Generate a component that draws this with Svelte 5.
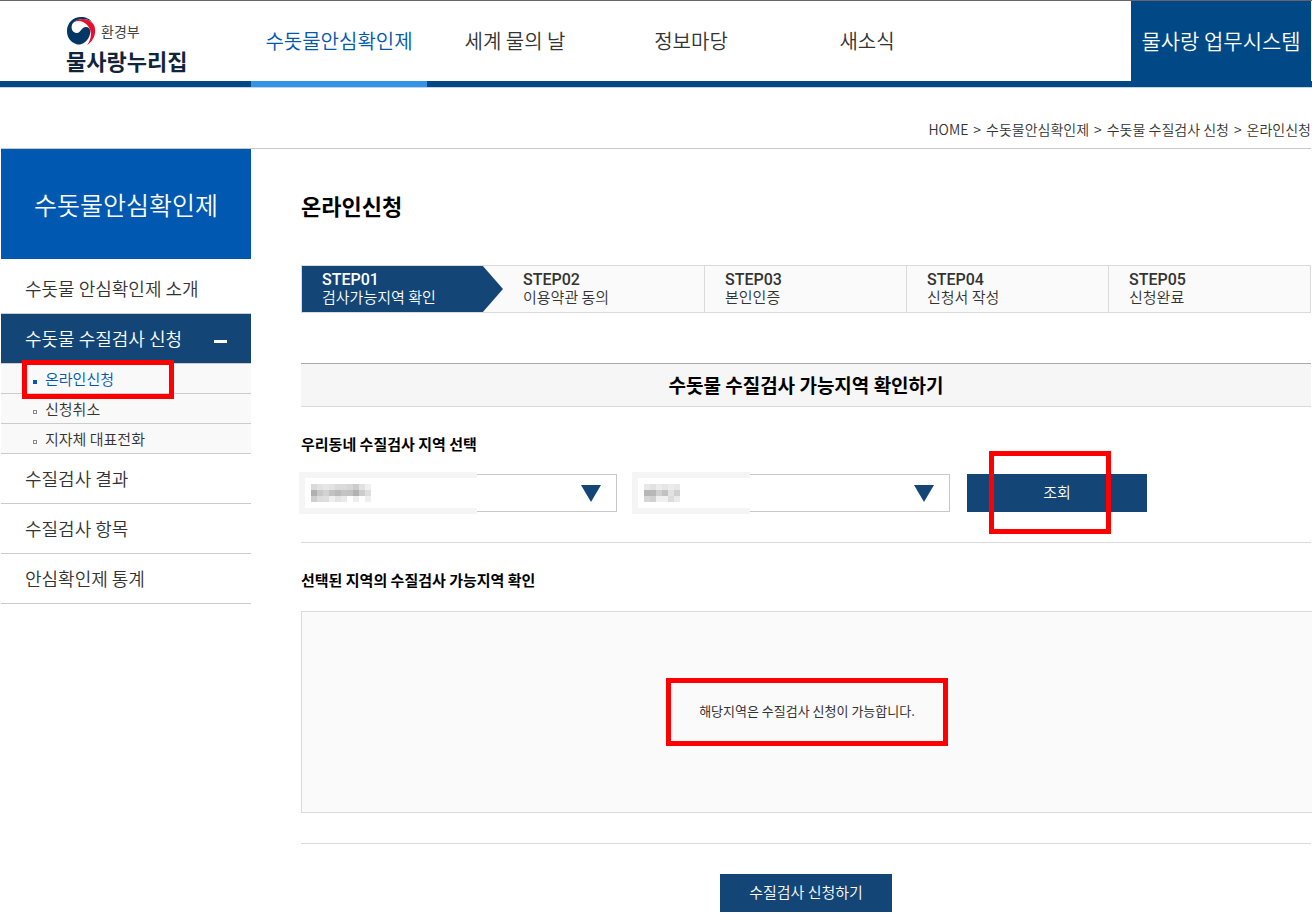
<script>
	const menus = [
		{ name: '수돗물안심확인제', active: true },
		{ name: '세계 물의 날' },
		{ name: '정보마당' },
		{ name: '새소식' }
	];

	const path = ['수돗물안심확인제', '수돗물 수질검사 신청', '온라인신청'];

	const subMenus = [
		{ name: '온라인신청', active: true },
		{ name: '신청취소' },
		{ name: '지자체 대표전화' }
	];

	const sideMenus = ['수질검사 결과', '수질검사 항목', '안심확인제 통계'];

	const steps = ['검사가능지역 확인', '이용약관 동의', '본인인증', '신청서 작성', '신청완료'];

	// grey levels of the masked values, 6px per cell
	const regions = [
		{
			id: 'sido',
			label: '시도',
			width: 178,
			cells: [
				[218, 226, 230, 226, 218, 218, 214, 204, 226, 240],
				[176, 200, 210, 194, 186, 196, 194, 178, 204, 222],
				[206, 220, 222, 238, 228, 234, 255, 238, 255, 240]
			]
		},
		{
			id: 'sigungu',
			label: '시군구',
			width: 118,
			cells: [
				[232, 226, 236, 230, 236, 232],
				[182, 184, 208, 194, 226, 208],
				[214, 208, 240, 240, 220, 234]
			]
		}
	];
</script>

<div class="page">
	<header>
		<a class="logo" href="#home">
			<span class="ministry">
				<svg width="30" height="30" viewBox="0 0 30 30" aria-hidden="true">
					<path
						d="M1 15 C1 7 7 1 15 1 C20 1 24 3 26 6 C21 2 12 2 7 7 C4 11 6 17 11 17 C15 17 15 11 20 11 C25 11 25 17 23 21 C20 27 14 30 10 28 C4 26 1 21 1 15Z"
						fill="#003764"
					/>
					<path
						d="M8 6 C14 1 24 2 28 9 C31 16 28 25 21 29 C26 23 26 15 22 10 C18 5 13 4 8 6Z"
						fill="#e60f2d"
					/>
				</svg>
				환경부
			</span>
			<strong>물사랑누리집</strong>
		</a>
		<nav>
			{#each menus as menu}
				<a href="#menu" class:active={menu.active}>{menu.name}</a>
			{/each}
		</nav>
		<a class="system" href="#system">물사랑 업무시스템</a>
	</header>

	<div class="path">
		<span>HOME</span>
		{#each path as name}
			<span>&gt;</span>
			<span>{name}</span>
		{/each}
	</div>

	<div class="container">
		<aside>
			<h2>수돗물안심확인제</h2>
			<ul>
				<li><a class="first" href="#intro">수돗물 안심확인제 소개</a></li>
				<li>
					<a class="open" href="#apply">수돗물 수질검사 신청 <i></i></a>
					<ul class="sub">
						{#each subMenus as sub}
							<li>
								<a href="#sub" class:on={sub.active}>{sub.name}</a>
								{#if sub.active}<span class="mark mark-menu"></span>{/if}
							</li>
						{/each}
					</ul>
				</li>
				{#each sideMenus as name}
					<li><a href="#side">{name}</a></li>
				{/each}
			</ul>
		</aside>

		<main>
			<h1>온라인신청</h1>

			<ol class="steps">
				{#each steps as step, i}
					<li class:current={i === 0}>
						<strong>STEP0{i + 1}</strong>
						<span>{step}</span>
					</li>
				{/each}
			</ol>

			<h2 class="banner">수돗물 수질검사 가능지역 확인하기</h2>

			<h3>우리동네 수질검사 지역 선택</h3>
			<form class="search" on:submit|preventDefault>
				{#each regions as region}
					<div class="select">
						<select id={region.id} aria-label={region.label}>
							<option></option>
						</select>
						<svg class="arrow" width="20" height="17" viewBox="0 0 20 17" aria-hidden="true">
							<path d="M0 0H20L10 17Z" fill="#134676" />
						</svg>
						<svg class="mask" width={region.width} height="42" aria-hidden="true">
							<rect width={region.width} height="42" fill="#f5f5f5" />
							<rect x="6" y="6" width={region.width - 6} height="30" fill="#fff" />
							{#each region.cells as row, y}
								{#each row as level, x}
									<rect x={12 + x * 6} y={12 + y * 6} width="6" height="6" fill="rgb({level},{level},{level})" />
								{/each}
							{/each}
						</svg>
					</div>
				{/each}
				<button class="btn search-btn">조회<span class="mark mark-search"></span></button>
			</form>

			<h3>선택된 지역의 수질검사 가능지역 확인</h3>
			<div class="result">
				<p>해당지역은 수질검사 신청이 가능합니다.</p>
			</div>

			<div class="bottom">
				<button class="btn">수질검사 신청하기</button>
			</div>
		</main>
	</div>
</div>

<style>
	:global(body) {
		background: #fff;
	}

	.page {
		padding: 0 1px;
		border-top: 1px solid #66666a;
		overflow: hidden;
		font-family: 'Noto Sans CJK KR', sans-serif;
		font-weight: 350;
		color: #333;
	}

	a {
		color: inherit;
		text-decoration: none;
	}

	ul,
	ol {
		margin: 0;
		padding: 0;
		list-style: none;
	}

	h1,
	h2,
	h3,
	p {
		margin: 0;
	}

	header {
		display: flex;
		height: 80px;
		margin: 0 -1px;
		padding: 0 1px;
		border-bottom: 6px solid #004986;
		box-shadow: 0 1px 0 #c5d3df;
	}

	.logo {
		width: 185px;
		padding: 15px 0 0 65px;
		color: #10243c;
	}

	.ministry {
		display: flex;
		align-items: center;
		gap: 5px;
		height: 30px;
		font-size: 14px;
		font-weight: 400;
		color: #444;
	}

	.logo strong {
		display: block;
		font-size: 22px;
		line-height: 28px;
		font-weight: 700;
	}

	nav {
		display: flex;
		flex: 1;
	}

	nav a {
		width: 176px;
		height: 80px;
		border-bottom: 6px solid transparent;
		font-size: 20px;
		line-height: 80px;
		text-align: center;
	}

	nav a.active {
		border-color: #3393e6;
		color: #0058b0;
	}

	.system {
		width: 180px;
		background: #004986;
		color: #fff;
		font-size: 21px;
		line-height: 78px;
		text-align: center;
	}

	.path {
		display: flex;
		justify-content: flex-end;
		gap: 5px;
		height: 61px;
		border-bottom: 1px solid #c8c8c8;
		font-size: 14px;
		line-height: 85px;
	}

	.container {
		display: flex;
		gap: 50px;
	}

	aside {
		width: 250px;
		flex: none;
	}

	aside h2 {
		background: #0058b0;
		color: #fff;
		font-size: 25px;
		font-weight: 350;
		line-height: 110px;
		text-align: center;
	}

	aside a {
		display: block;
		padding-left: 24px;
		border-bottom: 1px solid #ccc;
		font-size: 18px;
		line-height: 49px;
	}

	aside .first {
		padding-top: 5px;
	}

	aside .open {
		display: flex;
		align-items: center;
		justify-content: space-between;
		padding-right: 24px;
		background: #134676;
		color: #fff;
	}

	.open i {
		width: 13px;
		height: 3px;
		margin-top: 6px;
		background: #fff;
	}

	.sub li {
		position: relative;
	}

	.sub a {
		display: flex;
		align-items: center;
		gap: 8px;
		padding-left: 32px;
		background: #f9f9f9;
		font-size: 15px;
		line-height: 29px;
	}

	.sub a::before {
		content: '';
		box-sizing: border-box;
		width: 4px;
		height: 4px;
		margin-top: 6px;
		border: 1px solid #888;
	}

	.sub a.on {
		color: #0058b0;
	}

	.sub a.on::before {
		background: #0058b0;
		border-color: #0058b0;
	}

	.mark {
		position: absolute;
		z-index: 1;
		box-sizing: border-box;
		border: 5px solid #f00;
		pointer-events: none;
	}

	.mark-menu {
		top: -4px;
		left: 21px;
		width: 152px;
		height: 39px;
	}

	main {
		flex: 1;
		min-width: 0;
	}

	h1 {
		padding: 40px 0 44px;
		color: #000;
		font-size: 22px;
		font-weight: 700;
		line-height: 32px;
	}

	.steps {
		display: flex;
		border: 1px solid #dadada;
		background: #fafafa;
	}

	.steps li {
		flex: 1;
		box-sizing: border-box;
		height: 46px;
		padding: 5px 0 0 20px;
		border-left: 1px solid #dadada;
		font-size: 15px;
		line-height: 17px;
	}

	.steps li:first-child,
	.steps li:nth-child(2) {
		border-left: 0;
	}

	.steps .current {
		background: #134676;
		clip-path: polygon(0 0, 90% 0, 100% 50%, 90% 100%, 0 100%);
		color: #fff;
	}

	.steps strong,
	.steps span {
		display: block;
	}

	.steps strong {
		font-family: Roboto, sans-serif;
		font-size: 16px;
		font-weight: 500;
	}

	.banner {
		margin: 50px 0 23px;
		border-top: 1px solid #aaa;
		border-bottom: 1px solid #dadada;
		background: #f6f6f6;
		color: #000;
		font-size: 19px;
		font-weight: 700;
		line-height: 42px;
		text-align: center;
	}

	h3 {
		color: #000;
		font-size: 15px;
		font-weight: 700;
		line-height: 28px;
	}

	.search {
		display: flex;
		gap: 17px;
		margin-bottom: 23px;
		padding: 16px 0 30px;
		border-bottom: 1px solid #dadada;
	}

	.select {
		position: relative;
		width: 316px;
	}

	select {
		width: 100%;
		height: 38px;
		border: 1px solid #c8c8c8;
		border-radius: 0;
		background: #fff;
		appearance: none;
	}

	.arrow {
		position: absolute;
		top: 11px;
		right: 16px;
		pointer-events: none;
	}

	.mask {
		position: absolute;
		top: -2px;
		left: -2px;
		pointer-events: none;
	}

	.btn {
		position: relative;
		height: 38px;
		padding: 0 29px 4px;
		border: 0;
		background: #134676;
		color: #fff;
		font-family: inherit;
		font-size: 15px;
		font-weight: 350;
		cursor: pointer;
	}

	.search-btn {
		width: 180px;
	}

	.mark-search {
		top: -23px;
		left: 22px;
		width: 122px;
		height: 83px;
	}

	.result {
		display: flex;
		align-items: center;
		justify-content: center;
		height: 200px;
		margin: 17px -1px 30px 0;
		border: 1px solid #dadada;
		border-right: 0;
		background: #fafafa;
	}

	.result p {
		padding: 18px 28px 20px;
		border: 5px solid #f00;
		font-size: 13px;
		font-weight: 400;
		line-height: 20px;
	}

	.bottom {
		padding: 30px 0 2px;
		border-top: 1px solid #dadada;
		text-align: center;
	}
</style>
